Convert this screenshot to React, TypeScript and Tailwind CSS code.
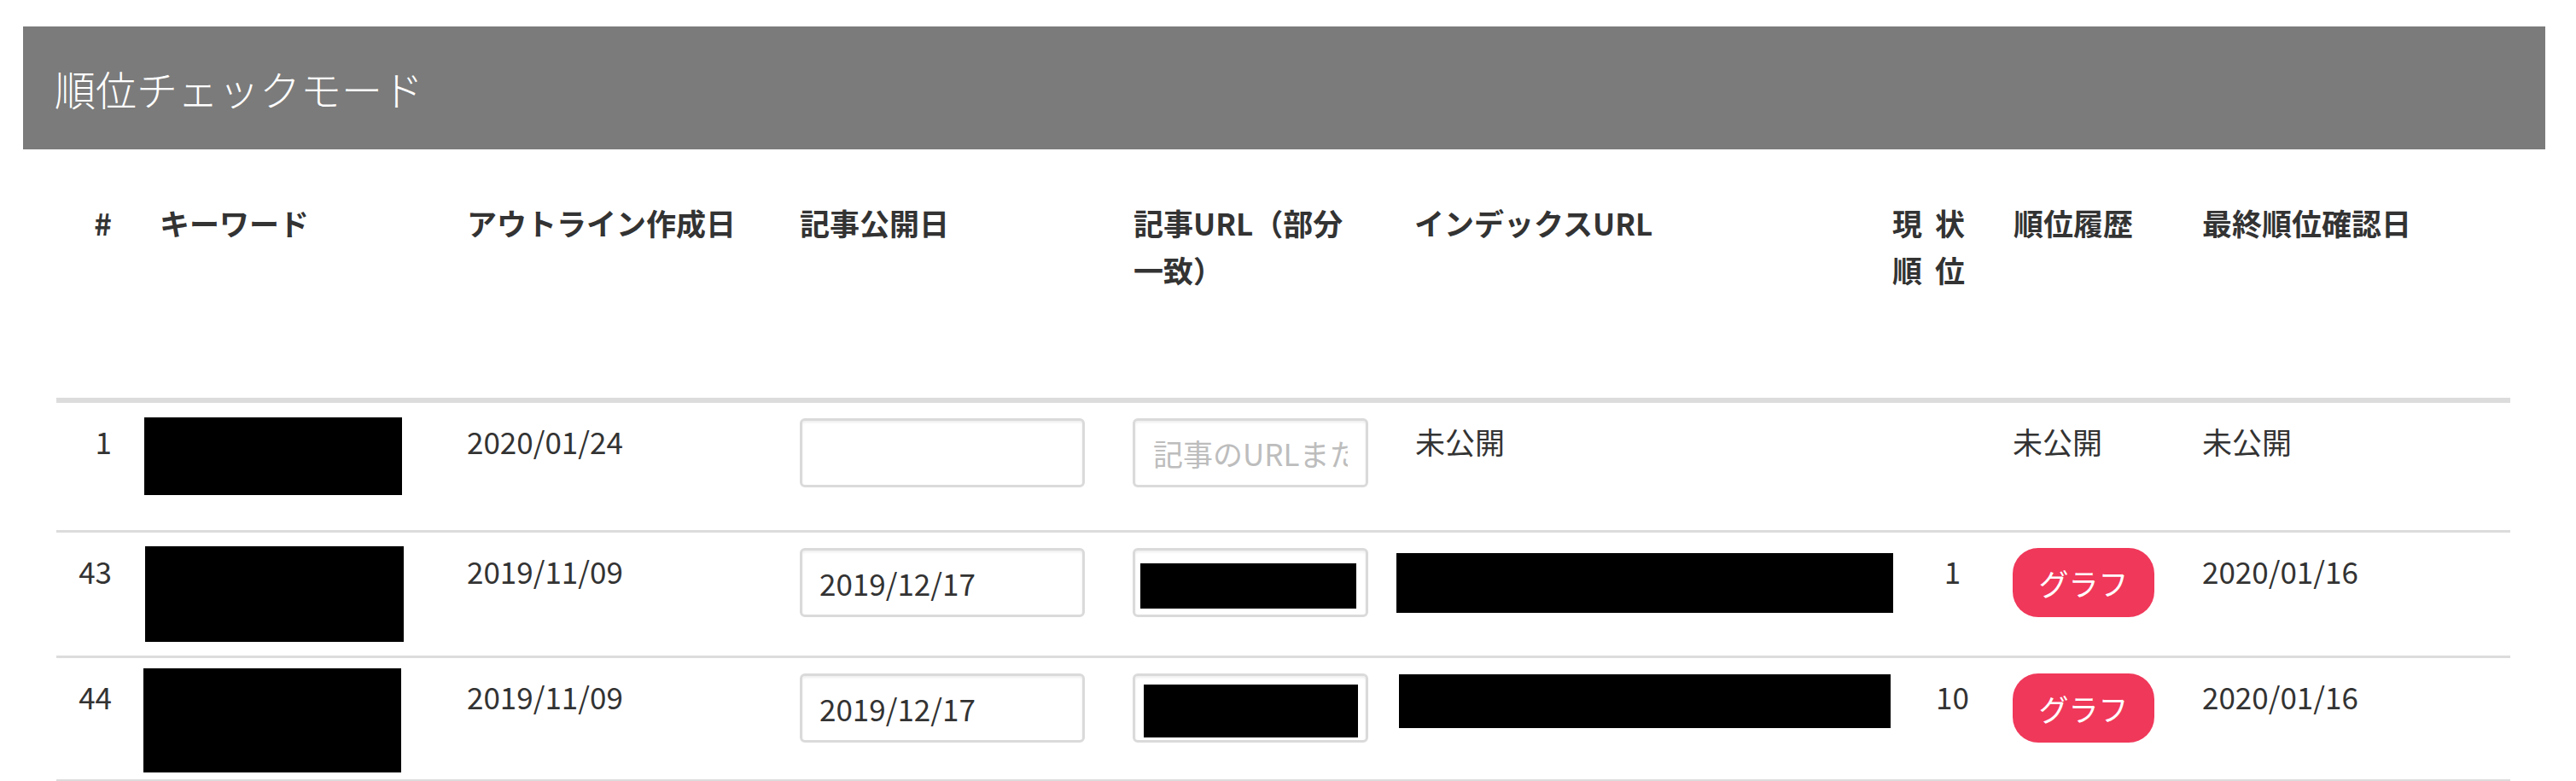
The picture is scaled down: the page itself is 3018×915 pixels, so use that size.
const FONT = "font-['Noto_Sans_CJK_JP','Noto_Sans',sans-serif]";

const GRID =
  "grid grid-cols-[65px_416px_390px_390px_309px_581px_141px_222px_361px]";

type Row = {
  no: number;
  kwBox: string;
  outline: string;
  published: string;
  url: "placeholder" | string;
  index: "unpublished" | string;
  rank: string;
  last: string;
  height: string;
};

const rows: Row[] = [
  {
    no: 1,
    kwBox: "mt-[17px] h-[91px] w-[302px] ml-[38px]",
    outline: "2020/01/24",
    published: "",
    url: "placeholder",
    index: "unpublished",
    rank: "",
    last: "未公開",
    height: "h-[152px]",
  },
  {
    no: 43,
    kwBox: "mt-[16px] h-[112px] w-[303px] ml-[39px]",
    outline: "2019/11/09",
    published: "2019/12/17",
    url: "pt-[15px] pl-[6px] pr-[11px] pb-[7px]",
    index: "mt-[24px] h-[70px] w-[582px]",
    rank: "1",
    last: "2020/01/16",
    height: "h-[147px]",
  },
  {
    no: 44,
    kwBox: "mt-[12px] h-[122px] w-[302px] ml-[37px]",
    outline: "2019/11/09",
    published: "2019/12/17",
    url: "pt-[10px] pl-[10px] pr-[9px] pb-[3px]",
    index: "mt-[19px] h-[63px] w-[576px] ml-[3px]",
    rank: "10",
    last: "2020/01/16",
    height: "h-[145px]",
  },
];

const inputBase =
  "h-[81px] rounded-[6px] border-[3px] border-[#dadada] bg-white shadow-[inset_0_2px_3px_rgba(0,0,0,0.07)] text-[35px] text-[#333] outline-none";

function DataRow({ r }: { r: Row }) {
  return (
    <div className={`${GRID} ${r.height} border-b-[3px] border-[#dcdcdc] text-[35px] leading-[55px] text-[#333]`}>
      <div className="pt-[17px] text-right">{r.no}</div>
      <div>
        <div className={`${r.kwBox} bg-black`} />
      </div>
      <div className="pt-[17px]">{r.outline}</div>
      <div className="pt-[18px]">
        <input
          readOnly
          value={r.published}
          className={`${inputBase} w-[334px] px-[20px] ${FONT}`}
        />
      </div>
      <div className="pt-[18px]">
        {r.url === "placeholder" ? (
          <input
            readOnly
            placeholder="記事のURLまたはキーワード"
            className={`${inputBase} w-[276px] px-[21px] placeholder:text-[#bdbdbd] ${FONT}`}
          />
        ) : (
          <div className={`${inputBase} w-[276px] flex ${r.url}`}>
            <div className="flex-1 bg-black" />
          </div>
        )}
      </div>
      <div>
        {r.index === "unpublished" ? (
          <div className="pt-[17px] pl-[22px]">未公開</div>
        ) : (
          <div className={`${r.index} bg-black`} />
        )}
      </div>
      <div className="pt-[17px] text-center">{r.rank}</div>
      <div>
        {r.rank === "" ? (
          <div className="pt-[17px]">未公開</div>
        ) : (
          <div className="pt-[18px]">
            <button className="flex h-[81px] w-[166px] items-center justify-center rounded-[30px] bg-[#f0385a] text-[35px] text-white">
              グラフ
            </button>
          </div>
        )}
      </div>
      <div className="pt-[17px]">{r.last}</div>
    </div>
  );
}

export default function App() {
  return (
    <div className={`min-h-[915px] w-[3018px] bg-white pt-[31px] ${FONT}`}>
      <div className="ml-[27px] flex h-[144px] w-[2955px] items-center bg-[#7b7b7b] pl-[37px]">
        <h1 className="text-[48px] font-light leading-none text-white">
          順位チェックモード
        </h1>
      </div>

      <div className="ml-[66px] w-[2875px]">
        {/* head */}
        <div className={`${GRID} h-[297px] border-b-[6px] border-[#dcdcdc] pt-[58px] text-[35px] font-bold leading-[55px] text-[#333]`}>
          <div className="text-right">#</div>
          <div className="pl-[56px]">キーワード</div>
          <div>アウトライン作成日</div>
          <div>記事公開日</div>
          <div className="pl-[1px]">
            記事URL（部分
            <br />
            一致）
          </div>
          <div className="pl-[21px]">インデックスURL</div>
          <div className="w-[85px]">
            <div className="flex justify-between">
              <span>現</span>
              <span>状</span>
            </div>
            <div className="flex justify-between">
              <span>順</span>
              <span>位</span>
            </div>
          </div>
          <div className="pl-[1px]">順位履歴</div>
          <div>最終順位確認日</div>
        </div>

        {rows.map((r) => (
          <DataRow key={r.no} r={r} />
        ))}
      </div>
    </div>
  );
}
